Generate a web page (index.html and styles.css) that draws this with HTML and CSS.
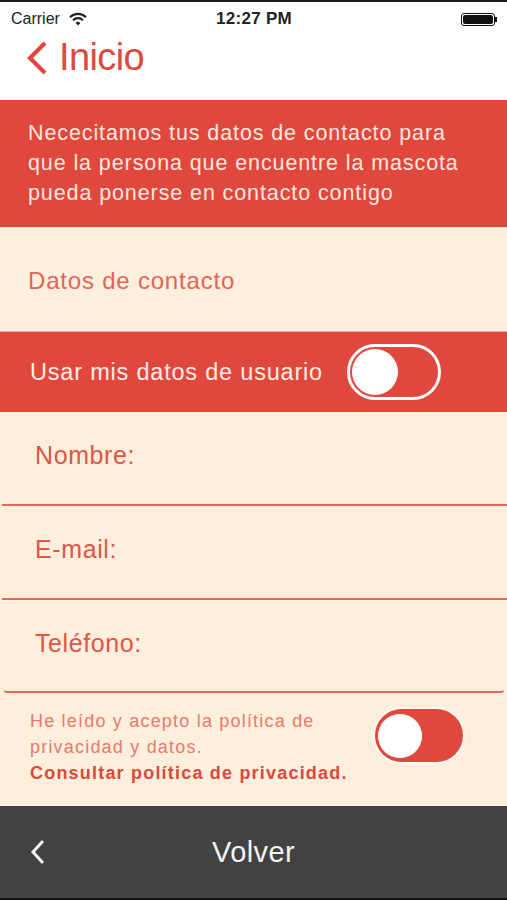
FILE: index.html
```html
<!DOCTYPE html>
<html>
<head>
    <meta charset="utf-8">
    <meta name="viewport" content="width=device-width, initial-scale=1">
    <title>Datos de contacto</title>
    <link rel="stylesheet" href="styles.css">
</head>
<body>

<div class="screen">
    <div class="status-bar">
        <div class="status-left">
            <span>Carrier</span>
            <svg class="wifi" width="18" height="14" viewBox="0 0 18 14">
                <path d="M1 5.2 A11.5 11.5 0 0 1 17 5.2" fill="none" stroke="#222" stroke-width="2.2"/>
                <path d="M4 8.2 A7.2 7.2 0 0 1 14 8.2" fill="none" stroke="#222" stroke-width="2.2"/>
                <path d="M6.6 10.9 A3.4 3.4 0 0 1 11.4 10.9 L9 13.4 Z" fill="#222"/>
            </svg>
        </div>
        <div class="status-time">12:27 PM</div>
        <div class="status-right">
            <div class="battery"><div class="battery-fill"></div></div>
            <div class="battery-nub"></div>
        </div>
    </div>

    <div class="nav">
        <a href="#" class="back-link">
            <svg width="24" height="36" viewBox="0 0 24 36">
                <path d="M20 3 L5 18 L20 33" fill="none" stroke="#e0483e" stroke-width="4.2"/>
            </svg>
            <span>Inicio</span>
        </a>
    </div>

    <div class="banner">
        Nececitamos tus datos de contacto para<br>
        que la persona que encuentre la mascota<br>
        pueda ponerse en contacto contigo
    </div>

    <div class="section-title">Datos de contacto</div>

    <div class="user-row">
        <span>Usar mis datos de usuario</span>
        <div class="switch-outline"><span class="knob"></span></div>
    </div>

    <div class="field">Nombre:</div>
    <div class="field">E-mail:</div>
    <div class="field field-last">Teléfono:</div>

    <div class="privacy">
        <div class="privacy-text">
            He leído y acepto la política de<br>
            privacidad y datos.<br>
            <a href="#" class="privacy-link">Consultar política de privacidad.</a>
        </div>
        <div class="switch-filled"><span class="knob"></span></div>
    </div>

    <div class="footer">
        <svg class="footer-back" width="18" height="26" viewBox="0 0 18 26">
            <path d="M14 2 L4 13 L14 24" fill="none" stroke="#f4f4f4" stroke-width="3"/>
        </svg>
        <span class="footer-title">Volver</span>
        <span></span>
    </div>
</div>

</body>
</html>
```

FILE: styles.css
```css
body {
    margin: 0;
    padding: 0;
    font-family: "Liberation Sans", Arial, sans-serif;
    background-color: #111;
}

.screen {
    width: 507px;
    height: 900px;
    display: flex;
    flex-direction: column;
    background-color: #fdefdc;
    border-top: 2px solid #1c1c1c;
    border-bottom: 2px solid #111;
    box-sizing: border-box;
    overflow: hidden;
}

/* status bar */
.status-bar {
    height: 34px;
    background-color: #fff;
    display: flex;
    align-items: center;
    justify-content: space-between;
    padding: 0 10px 0 11px;
    font-size: 16px;
    color: #222;
}

.status-left {
    display: flex;
    align-items: center;
    gap: 9px;
    width: 120px;
}

.status-time {
    font-weight: bold;
    font-size: 17px;
    letter-spacing: 0.3px;
}

.status-right {
    display: flex;
    align-items: center;
    justify-content: flex-end;
    width: 120px;
}

.battery {
    width: 34px;
    height: 13px;
    border: 1px solid #111;
    border-radius: 3px;
    padding: 1px;
    box-sizing: border-box;
    display: flex;
}

.battery-fill {
    flex: 1;
    background-color: #111;
    border-radius: 2px;
}

.battery-nub {
    width: 2px;
    height: 5px;
    background-color: #111;
}

/* navigation */
.nav {
    height: 64px;
    background-color: #fff;
    display: flex;
    align-items: flex-start;
    padding-left: 25px;
}

.back-link {
    display: flex;
    align-items: center;
    gap: 10px;
    text-decoration: none;
    color: #e0483e;
    font-size: 38px;
    letter-spacing: -0.6px;
    margin-top: 0;
}

/* red banner */
.banner {
    background-color: #e0483e;
    color: #fde6de;
    font-size: 21.5px;
    letter-spacing: 0.9px;
    line-height: 30px;
    padding: 18px 10px 19px 28px;
}

.section-title {
    height: 105px;
    display: flex;
    align-items: center;
    padding: 4px 0 0 28px;
    box-sizing: border-box;
    font-size: 24px;
    letter-spacing: 0.8px;
    color: #e0655b;
    border-bottom: 1px solid #f1b09f;
}

.user-row {
    height: 80px;
    background-color: #e0483e;
    display: flex;
    align-items: center;
    padding-left: 30px;
    gap: 24px;
    font-size: 23.5px;
    letter-spacing: 0.8px;
    color: #fdeee4;
}

.switch-outline {
    width: 94px;
    height: 56px;
    border: 3px solid #fff;
    border-radius: 28px;
    box-sizing: border-box;
    display: flex;
    align-items: center;
    padding-left: 2px;
}

.switch-outline .knob {
    width: 46px;
    height: 46px;
    border-radius: 50%;
    background-color: #fff;
}

/* form fields */
.field {
    height: 94px;
    box-sizing: border-box;
    padding: 29px 0 0 33px;
    font-size: 25px;
    letter-spacing: 0.6px;
    color: #e0554b;
    border-bottom: 2px solid #e2675d;
    margin-left: 2px;
}

.field-last {
    height: 93px;
    margin: 0 3px 0 4px;
    padding-left: 31px;
    border-radius: 0 0 3px 3px;
}

/* privacy */
.privacy {
    flex: 1;
    display: flex;
    align-items: flex-start;
    padding: 15px 44px 0 30px;
}

.privacy-text {
    font-size: 18px;
    letter-spacing: 1.2px;
    line-height: 26px;
    color: #e8796c;
}

.privacy-link {
    font-weight: bold;
    letter-spacing: 1.2px;
    color: #dc483e;
    text-decoration: none;
}

.switch-filled {
    margin-left: auto;
    margin-top: 1px;
    flex-shrink: 0;
    width: 88px;
    height: 53px;
    border-radius: 27px;
    background-color: #e0483e;
    box-shadow: 0 0 0 2px rgba(255, 255, 255, 0.7);
    display: flex;
    align-items: center;
    padding-left: 2px;
    box-sizing: border-box;
}

.switch-filled .knob {
    width: 46px;
    height: 46px;
    border-radius: 50%;
    background-color: #fff;
    border: 1px solid #d9453b;
    box-sizing: border-box;
}

/* footer */
.footer {
    height: 92px;
    background-color: #424242;
    display: grid;
    grid-template-columns: 1fr auto 1fr;
    align-items: center;
    padding-left: 29px;
    padding-right: 29px;
}

.footer-title {
    font-size: 29px;
    letter-spacing: 0.4px;
    color: #f4f4f4;
}
```
